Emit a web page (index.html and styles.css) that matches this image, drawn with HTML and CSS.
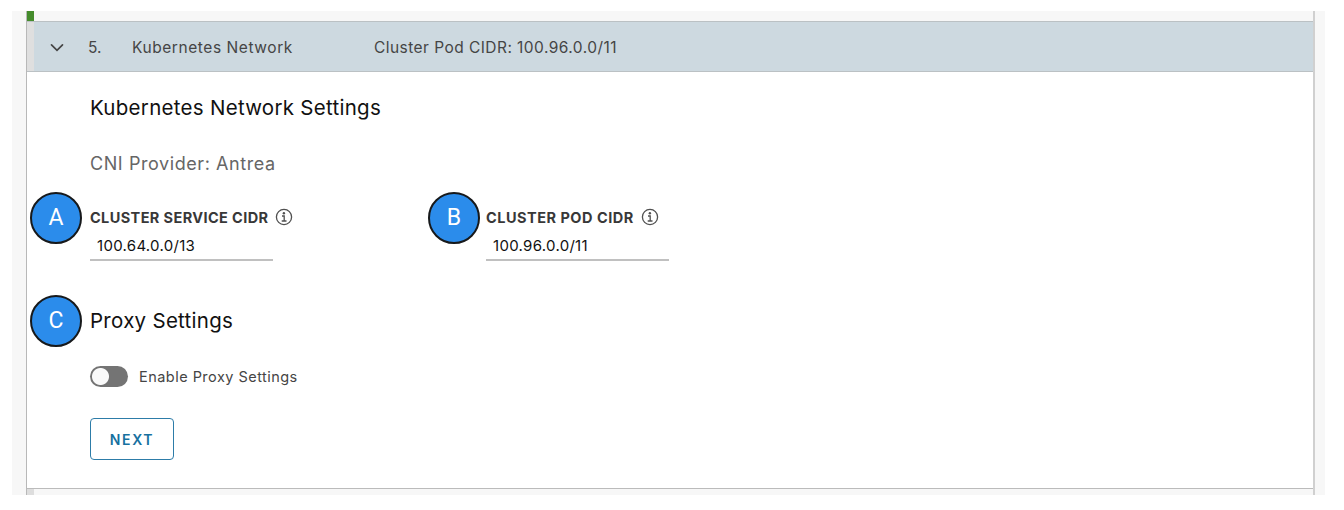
FILE: index.html
```html
<!DOCTYPE html>
<html lang="en">
<head>
<meta charset="utf-8">
<title>Kubernetes Network</title>
<link rel="stylesheet" href="styles.css">
</head>
<body>
<main class="page">
  <div class="accordion">
    <div class="step-stub done"></div>
    <header class="step-header">
      <svg class="chevron" viewBox="0 0 14 10"><path d="M1.500 1.800 7 7.400l5.500-5.600"/></svg>
      <span class="step-number">5.</span>
      <span class="step-title">Kubernetes Network</span>
      <span class="step-summary">Cluster Pod CIDR: 100.96.0.0/11</span>
    </header>
    <section class="step-body">
      <h2 class="heading">Kubernetes Network Settings</h2>
      <p class="provider">CNI Provider: Antrea</p>
      <div class="fields">
        <div class="field">
          <span class="badge">A</span>
          <div class="label"><label for="svc">CLUSTER SERVICE CIDR</label>
            <svg class="info" viewBox="0 0 18 18"><circle cx="9" cy="9" r="7.600"/><circle class="dot" cx="8.900" cy="5.200" r="1.200"/><path d="M7 8h2.200v5M6.700 13h4.800"/></svg>
          </div>
          <input class="value" id="svc" value="100.64.0.0/13">
        </div>
        <div class="field">
          <span class="badge badge-pod">B</span>
          <div class="label label-pod"><label for="pod">CLUSTER POD CIDR</label>
            <svg class="info" viewBox="0 0 18 18"><circle cx="9" cy="9" r="7.600"/><circle class="dot" cx="8.900" cy="5.200" r="1.200"/><path d="M7 8h2.200v5M6.700 13h4.800"/></svg>
          </div>
          <input class="value value-pod" id="pod" value="100.96.0.0/11">
        </div>
      </div>
      <h2 class="heading heading-proxy"><span class="badge">C</span>Proxy Settings</h2>
      <div class="toggle-row"><span class="toggle"></span><span>Enable Proxy Settings</span></div>
      <button class="next">NEXT</button>
    </section>
    <div class="step-stub"></div>
  </div>
</main>
</body>
</html>
```
FILE: styles.css
```css
* { box-sizing: border-box; }
body { margin: 0; background: #fff; font-family: Inter, "Liberation Sans", sans-serif; color: #454545; }
.page { margin: 11px 19px 0 12px; height: 484px; padding: 0 10px 0 14px; background: #f7f7f7; overflow: hidden; }
.accordion { height: 484px; border-left: 1px solid #b8b8b8; border-right: 2px solid #d0d0d0; display: flex; flex-direction: column; white-space: nowrap; }
.step-stub { height: 10px; flex: none; border-left: 7px solid #ddd; }
.step-stub.done { border-left-color: #458c2c; }
.step-header { height: 51px; flex: none; display: flex; align-items: center; background: linear-gradient(90deg, #dfdfdf 7px, #cdd9e0 7px); border-top: 1px solid #bbc1c4; border-bottom: 1px solid #bbc1c4; padding: 2px 0 0 23px; font-size: 15.500px; }
.chevron { width: 14px; height: 10px; margin-right: 24px; fill: none; stroke: #454545; stroke-width: 1.700; stroke-linecap: round; }
.step-number { width: 44px; }
.step-title { width: 242px; letter-spacing: .57px; }
.step-summary { letter-spacing: .45px; }
.step-body { height: 417px; flex: none; background: #fff; border-bottom: 1px solid #bbb; padding: 23px 0 0 63px; }
.heading { position: relative; margin: 0; height: 26px; line-height: 26px; font-size: 20.500px; font-weight: 400; letter-spacing: .28px; color: #111; }
.provider { margin: 30px 0 0; height: 26px; line-height: 26px; font-size: 18px; letter-spacing: .57px; color: #666; }
.fields { display: flex; gap: 213px; margin-top: 30px; }
.field { position: relative; width: 183px; height: 54px; }
.label { display: flex; align-items: center; gap: 7px; height: 20px; font-size: 14.500px; font-weight: 700; letter-spacing: .39px; color: #383838; }
.label-pod { letter-spacing: .5px; }
.info { width: 18px; height: 18px; flex: none; fill: none; stroke: #505050; stroke-width: 1.300; }
.info .dot { fill: #505050; stroke: none; }
.value { display: block; width: 183px; height: 34px; padding: 5px 0 0 7px; border: 0; border-bottom: 2px solid #c0c0c0; background: none; font: 15px Inter, "Liberation Sans", sans-serif; letter-spacing: .3px; color: #111; outline: 0; }
.badge { position: absolute; left: -60px; top: -15px; width: 52px; height: 52px; border: 2px solid #17191b; border-radius: 50%; background: #2b8ceb; color: #fff; font: 400 23px/47px Roboto, sans-serif; letter-spacing: 0; text-align: center; }
.badge-pod { left: -58px; }
.heading-proxy { margin-top: 47px; }
.heading-proxy .badge { top: -13px; }
.toggle-row { display: flex; align-items: center; gap: 11px; margin-top: 31px; height: 22px; font-size: 14.500px; letter-spacing: .47px; }
.toggle { width: 38px; height: 21px; border-radius: 11px; background: radial-gradient(circle at 10.500px 10.500px, #fafafa 8px, #747474 9px); }
.next { display: block; width: 84px; height: 42px; margin-top: 31px; padding: 0; border: 1px solid #2d7ca8; border-radius: 4px; background: #fff; color: #17719f; font: 600 14px Inter, sans-serif; letter-spacing: 1.600px; }
```
